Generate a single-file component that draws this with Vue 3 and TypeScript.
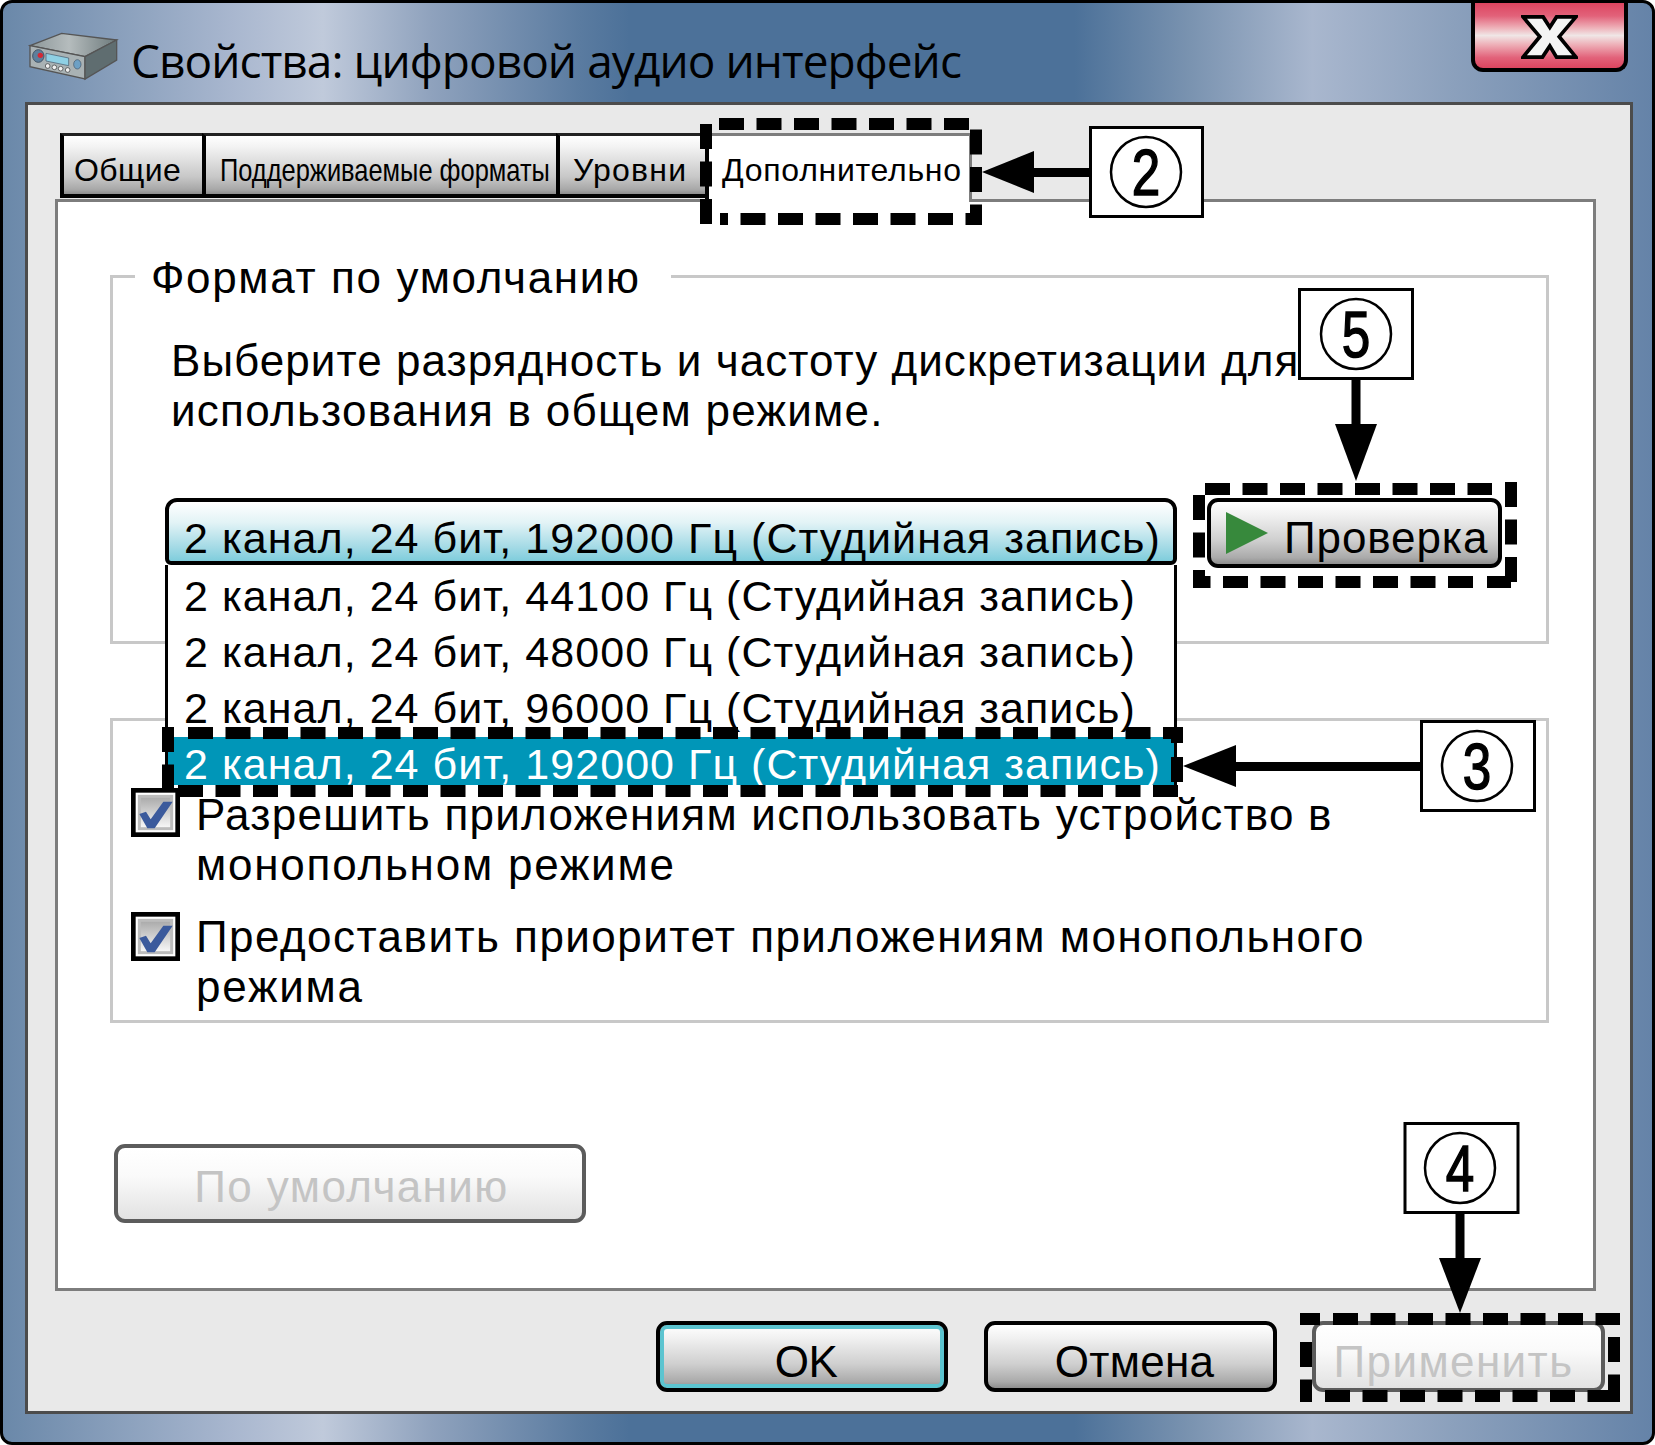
<script setup lang="ts">
const tabs = [
  { label: 'Общие', cls: 'tab-general' },
  { label: 'Поддерживаемые форматы', cls: 'tab-formats' },
  { label: 'Уровни', cls: 'tab-levels' },
  { label: 'Дополнительно', cls: 'tab-advanced' },
]
const rows = [
  { label: '2 канал, 24 бит, 44100 Гц (Студийная запись)', selected: false },
  { label: '2 канал, 24 бит, 48000 Гц (Студийная запись)', selected: false },
  { label: '2 канал, 24 бит, 96000 Гц (Студийная запись)', selected: false },
  { label: '2 канал, 24 бит, 192000 Гц (Студийная запись)', selected: true },
]
const checks = [
  { first: 'Разрешить приложениям использовать устройство в', cls: 'first-a', second: 'монопольном режиме' },
  { first: 'Предоставить приоритет приложениям монопольного', cls: 'first-b', second: 'режима' },
]
</script>

<template>
  <div class="window">
    <header class="titlebar">
      <svg class="device" viewBox="0 0 330 195" width="110" height="65">
        <defs>
          <linearGradient id="topface" x1="0" x2="1" y1="0" y2="0">
            <stop offset="0" stop-color="#8b9698" />
            <stop offset="0.45" stop-color="#b5bcbd" />
            <stop offset="1" stop-color="#6d7a7c" />
          </linearGradient>
        </defs>
        <polygon points="30,62 125,25 290,45 195,95" fill="url(#topface)" stroke="#555" stroke-width="4" />
        <polygon points="30,62 195,95 195,162 30,125" fill="#a9b2b4" stroke="#555" stroke-width="4" />
        <polygon points="195,95 290,45 290,105 195,162" fill="#5f6d70" stroke="#555" stroke-width="4" />
        <ellipse cx="55" cy="93" rx="17" ry="19" fill="#5d7f9c" stroke="#456" stroke-width="3" />
        <circle cx="61" cy="91" r="8" fill="#d32a35" />
        <polygon points="78,85 146,99 146,122 78,108" fill="#8fd0e4" stroke="#456" stroke-width="2" />
        <circle cx="83" cy="123" r="7" fill="#f0f0f0" stroke="#333" stroke-width="2" />
        <circle cx="103" cy="127" r="7" fill="#f0f0f0" stroke="#333" stroke-width="2" />
        <circle cx="122" cy="131" r="7" fill="#f0f0f0" stroke="#333" stroke-width="2" />
        <circle cx="143" cy="135" r="7" fill="#f0f0f0" stroke="#333" stroke-width="2" />
        <ellipse cx="172" cy="118" rx="11" ry="14" fill="#6da0c4" stroke="#456" stroke-width="2" />
      </svg>
      <h1 class="title">Свойства: цифровой аудио интерфейс</h1>
      <div class="close">
        <svg viewBox="0 0 170 130" width="57" height="44">
          <polygon
            points="6,5 66,5 86,36 106,5 164,5 114,64 164,125 106,125 86,92 64,125 6,125 56,64"
            fill="#f4f4f4"
            stroke="#000"
            stroke-width="11"
            stroke-linejoin="miter"
          />
        </svg>
      </div>
    </header>

    <main class="panel">
      <nav class="tabs">
        <div v-for="t in tabs" :key="t.label" class="tab" :class="t.cls"><span>{{ t.label }}</span></div>
      </nav>

      <section class="sheet">
        <div class="group group-format">
          <div class="legend">Формат по умолчанию</div>
          <p class="desc">Выберите разрядность и частоту дискретизации для<br /><span class="desc-second">использования в общем режиме.</span></p>
          <div class="format-row">
            <div class="combo">
              <div class="combo-value">2 канал, 24 бит, 192000 Гц (Студийная запись)</div>
              <ul class="list">
                <li v-for="r in rows" :key="r.label" class="row" :class="{ selected: r.selected }">{{ r.label }}</li>
              </ul>
            </div>
            <button class="btn btn-test">
              <svg viewBox="0 0 42 42" width="42" height="42"><polygon points="0,0 42,21 0,42" fill="#37893c" /></svg>
              <span>Проверка</span>
            </button>
          </div>
        </div>

        <div class="group group-mode">
          <div v-for="(c, i) in checks" :key="i" class="check">
            <svg class="box" viewBox="15 24 147 147" width="49" height="49">
              <defs>
                <linearGradient :id="'chk' + i" x1="0" x2="0" y1="0" y2="1">
                  <stop offset="0" stop-color="#a8a8a8" />
                  <stop offset="1" stop-color="#fafafa" />
                </linearGradient>
              </defs>
              <rect x="22" y="31" width="133" height="133" fill="#fff" stroke="#000" stroke-width="14" />
              <rect x="40" y="49" width="97" height="97" :fill="'url(#chk' + i + ')'" stroke="#bcbcbc" stroke-width="9" />
              <polygon points="40,102 60,95 74,118 112,65 140,65 86,145 64,145" fill="#3b5a9c" />
            </svg>
            <div class="check-text"><span :class="c.cls">{{ c.first }}</span><br /><span class="check-second">{{ c.second }}</span></div>
          </div>
        </div>

        <button class="btn btn-default" disabled>По умолчанию</button>
      </section>

      <footer class="actions">
        <button class="btn btn-ok">OK</button>
        <button class="btn btn-cancel">Отмена</button>
        <button class="btn btn-apply" disabled>Применить</button>
      </footer>
    </main>

    <svg class="annotations" viewBox="0 0 1655 1445" width="1655" height="1445">
      <g class="dash">
        <path d="M719 124 H976 V219 H720" />
        <path d="M706 124 V225" />

        <path d="M1205 489 H1492" />
        <path d="M1511 482 V583" />
        <path d="M1473 582 H1193" />
        <path d="M1487 582 H1511" />
        <path d="M1199 495 V588" />

        <path d="M188 733 H1183" />
        <path d="M1177 727 V743" />
        <path d="M1177 757 V782" />
        <path d="M168 727 V797" />
        <path d="M178 791 H1178" />

        <path d="M1333 1319 H1620" />
        <path d="M1300 1319 H1320" />
        <path d="M1614 1337 V1396" />
        <path d="M1306 1342 V1402" />
        <path d="M1325 1396 H1620" />
        <path d="M1596 1396 H1620" />
      </g>

      <rect class="line" x="1034" y="168" width="56" height="9" />
      <polygon points="982,172 1034,151 1034,193" />
      <g class="callout">
        <rect x="1090.500" y="127.500" width="112" height="89" />
        <circle cx="1146" cy="172" r="35" />
      </g>
      <text transform="translate(1146 195) scale(0.8 1)" class="num">2</text>

      <rect class="line" x="1236" y="762" width="185" height="9" />
      <polygon points="1183,766 1236,745 1236,787" />
      <g class="callout">
        <rect x="1421.500" y="721.500" width="113" height="89" />
        <circle cx="1477" cy="766" r="35" />
      </g>
      <text transform="translate(1477 789) scale(0.8 1)" class="num">3</text>

      <rect class="line" x="1351.500" y="380" width="9" height="46" />
      <polygon points="1356,481 1335,424 1377,424" />
      <g class="callout">
        <rect x="1299.500" y="289.500" width="113" height="89" />
        <circle cx="1356" cy="334" r="35" />
      </g>
      <text transform="translate(1356 357) scale(0.8 1)" class="num">5</text>

      <rect class="line" x="1455.500" y="1214" width="9" height="46" />
      <polygon points="1460,1313 1439,1258 1481,1258" />
      <g class="callout">
        <rect x="1405" y="1123.500" width="113" height="89" />
        <circle cx="1460" cy="1168" r="35" />
      </g>
      <text transform="translate(1460 1191) scale(0.8 1)" class="num">4</text>
    </svg>
  </div>
</template>

<style scoped>
.window {
  position: relative;
  box-sizing: border-box;
  width: 1655px;
  height: 1445px;
  border: 3px solid #000;
  border-radius: 12px;
  overflow: hidden;
  font-family: 'Liberation Sans', Arial, sans-serif;
  color: #000;
  background: linear-gradient(
    90deg,
    #6a88a9 0%,
    #a9b7cf 14%,
    #c0cadb 19.4%,
    #8fa2bd 26%,
    #5a7ba0 35%,
    #4c7199 38%,
    #4c7199 65%,
    #7a93b0 72%,
    #a9b7ce 79.4%,
    #8ba0bc 88%,
    #6583a8 100%
  );
}
.titlebar {
  display: flex;
  align-items: flex-start;
  height: 99px;
  padding-left: 17px;
}
.device {
  flex: none;
  margin-top: 22px;
}
.title {
  margin: 27px 0 0 1px;
  font-family: 'Open Sans', sans-serif;
  font-weight: 400;
  font-size: 46px;
  line-height: 60px;
  letter-spacing: -0.94px;
  white-space: nowrap;
}
.close {
  flex: none;
  box-sizing: border-box;
  width: 157px;
  height: 69px;
  margin-left: auto;
  margin-right: 24px;
  display: flex;
  justify-content: center;
  padding-top: 12px;
  padding-left: 0;
  border: 4px solid #000;
  border-top: 0;
  border-radius: 0 0 12px 12px;
  background: linear-gradient(
    180deg,
    #dd4560 0%,
    #e2627a 20%,
    #eeb0b8 38%,
    #f0e6e6 50%,
    #eeb0b8 64%,
    #e2627a 84%,
    #dd4560 100%
  );
}
.panel {
  box-sizing: border-box;
  width: 1608px;
  height: 1312px;
  margin-left: 22px;
  padding: 28px 25px 0 27px;
  border: 3px solid #4c4c4c;
  background: #e9e9e9;
}
.tabs {
  position: relative;
  z-index: 1;
  display: flex;
  height: 66px;
  margin-left: 5px;
  font-size: 32px;
}
.tab {
  box-sizing: border-box;
  height: 65px;
  padding-top: 16px;
  line-height: 36px;
  white-space: nowrap;
  border: 4px solid #000;
  border-width: 3px 0 4px 4px;
  border-top-color: #222;
  background: linear-gradient(180deg, #fff 0%, #f2f2f2 20%, #c8c8c8 70%, #a8a8a8 92%, #8c8c8c 100%);
}
.tab span {
  display: inline-block;
  transform-origin: left center;
}
.tab-general {
  width: 142px;
  padding-left: 10px;
}
.tab-general span {
  letter-spacing: 0.4px;
}
.tab-formats {
  width: 354px;
  padding-left: 14px;
}
.tab-formats span {
  transform: scaleX(0.795);
}
.tab-levels {
  width: 149px;
  padding-left: 13px;
}
.tab-levels span {
  letter-spacing: 1.2px;
}
.tab-advanced {
  width: 267px;
  height: 69px;
  padding-left: 13px;
  border: 3px solid #7d7d7d;
  border-left: 4px solid #000;
  border-bottom: 0;
  background: #fff;
}
.tab-advanced span {
  letter-spacing: 0.73px;
}
.sheet {
  box-sizing: border-box;
  width: 1541px;
  height: 1092px;
  padding: 73px 0 0 52px;
  border: 3px solid #7d7d7d;
  background: #fff;
}
.group {
  box-sizing: border-box;
  width: 1439px;
  border: 3px solid #c8c8c8;
  background: #fff;
}
.group-format {
  position: relative;
  z-index: 1;
  height: 369px;
  background: transparent;
}
.legend {
  display: block;
  width: max-content;
  margin: -24px 0 0 22px;
  padding: 0 30px 0 16px;
  height: 48px;
  line-height: 48px;
  font-size: 44px;
  letter-spacing: 1.65px;
  background: #fff;
}
.desc {
  margin: 34px 0 0 58px;
  font-size: 44px;
  line-height: 50px;
  letter-spacing: 1.05px;
  white-space: nowrap;
}
.desc-second {
  letter-spacing: 1.26px;
}
.format-row {
  display: flex;
  align-items: flex-start;
  gap: 30px;
  margin: 62px 0 0 52px;
}
.combo {
  position: relative;
  flex: none;
  width: 1012px;
}
.combo-value {
  box-sizing: border-box;
  height: 67px;
  padding: 9px 0 0 15px;
  line-height: 54px;
  font-size: 43px;
  letter-spacing: 1.05px;
  white-space: nowrap;
  border: 4px solid #000;
  border-radius: 12px 12px 6px 6px;
  background: linear-gradient(180deg, #fff 0%, #e2f3f6 35%, #a6dbe6 75%, #7fcddc 100%);
}
.list {
  position: absolute;
  left: 0;
  right: 0;
  top: 67px;
  margin: 0;
  padding: 3px 0 3px;
  list-style: none;
  background: #fff;
  border-left: 3px solid #000;
  border-right: 3px solid #000;
}
.row {
  height: 56px;
  padding-left: 16px;
  line-height: 56px;
  font-size: 43px;
  letter-spacing: 1.05px;
  white-space: nowrap;
}
.row.selected {
  height: 48px;
  margin-top: 1px;
  line-height: 55px;
  color: #fff;
  background: #0096b8;
}
.group-mode {
  height: 305px;
  margin-top: 74px;
  padding: 69px 0 0 18px;
}
.check {
  display: flex;
  align-items: flex-start;
  gap: 16px;
  margin-bottom: 22px;
}
.box {
  flex: none;
  margin-top: -2px;
}
.check + .check .box {
  margin-top: 0;
}
.check-text {
  font-size: 44px;
  line-height: 50px;
  white-space: nowrap;
}
.first-a {
  letter-spacing: 1.23px;
}
.first-b {
  letter-spacing: 1.46px;
}
.check-second {
  letter-spacing: 1.77px;
}
.btn {
  display: flex;
  align-items: center;
  justify-content: center;
  box-sizing: border-box;
  margin: 0;
  padding: 0;
  font-family: inherit;
  font-size: 44px;
  color: #000;
  border: 4px solid #000;
  border-radius: 11px;
  background: linear-gradient(180deg, #fff 0%, #f0f0f0 22%, #cfcfcf 62%, #aaa 90%, #8e8e8e 100%);
}
.btn:disabled {
  color: #c4c4c4;
  border-color: #5c5c5c;
  background: linear-gradient(180deg, #fff 0%, #fafafa 40%, #e2e2e2 100%);
}
.btn-test {
  flex: none;
  justify-content: flex-start;
  width: 295px;
  height: 70px;
  padding-left: 15px;
  gap: 16px;
}
.btn-test span {
  margin-top: 10px;
  letter-spacing: 0.9px;
}
.btn-test svg {
  flex: none;
}
.btn-default {
  width: 472px;
  height: 79px;
  margin: 121px 0 0 4px;
  padding: 6px 0 0 3px;
  letter-spacing: 1.4px;
}
.actions {
  display: flex;
  justify-content: flex-end;
  gap: 36px;
  margin-top: 30px;
}
.btn-ok {
  width: 292px;
  height: 71px;
  padding: 10px 0 0 8px;
  box-shadow: inset 0 0 0 4px #5cc4d0;
  letter-spacing: -0.5px;
}
.btn-cancel {
  width: 293px;
  height: 71px;
  padding: 10px 0 0 8px;
  letter-spacing: 0.3px;
}
.btn-apply {
  width: 293px;
  height: 71px;
  margin-left: -1px;
  padding: 10px 10px 0 0;
  letter-spacing: 1.4px;
}
.annotations {
  position: absolute;
  left: -3px;
  top: -3px;
  z-index: 2;
  pointer-events: none;
}
.dash path {
  fill: none;
  stroke: #000;
  stroke-width: 12;
  stroke-dasharray: 25 12.5;
}
.line {
  fill: #000;
}
.callout rect {
  fill: #fff;
  stroke: #000;
  stroke-width: 3;
}
.callout circle {
  fill: #fff;
  stroke: #000;
  stroke-width: 2.5;
}
.num {
  font-family: 'Liberation Sans', Arial, sans-serif;
  font-size: 64px;
  text-anchor: middle;
  stroke: #000;
  stroke-width: 1.5;
}
</style>

<style>
html,
body {
  margin: 0;
  background: #fff;
}
</style>
